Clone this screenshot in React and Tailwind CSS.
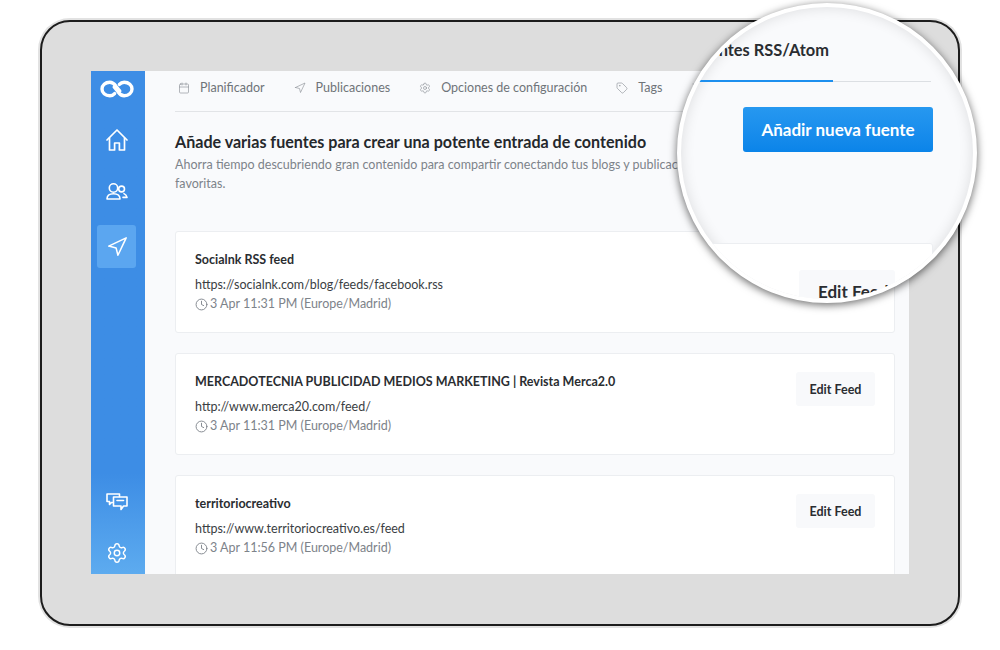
import React from "react";
import { Navigation, Settings, Calendar, Tag, Clock, Rss } from "lucide-react";

const LATO = "font-['Lato','Liberation_Sans',sans-serif]";

function Logo() {
  const link = "M20.8 12 L16.8 7 C15.2 4.6 13.5 3.2 10.8 3.2 C6.2 3.2 3 6.2 3 10 C3 13.8 6.2 16.8 10.8 16.8 C12.8 16.8 14.4 16 15.6 14.6";
  return (
    <svg width="36" height="20" viewBox="0 0 36 20" fill="none" stroke="#fff" strokeWidth="3.4" strokeLinecap="round" strokeLinejoin="round">
      <path d={link} />
      <path d={link} transform="rotate(180 18 10)" />
    </svg>
  );
}

function HomeIcon() {
  return (
    <svg width="22" height="22" viewBox="0 0 22 22" fill="none" stroke="#fff" strokeWidth="1.7" strokeLinecap="round" strokeLinejoin="round">
      <path d="M1 11 L11 1 L21 11" />
      <path d="M3.5 9 V21 H8.6 V14 H13.4 V21 H18.5 V9" />
    </svg>
  );
}

function UsersIcon() {
  return (
    <svg width="22" height="17" viewBox="0 0 22 17" fill="none" stroke="#fff" strokeWidth="1.6" strokeLinecap="round" strokeLinejoin="round">
      <circle cx="7.5" cy="5" r="4.2" />
      <path d="M1 16 C1 12.6 3.6 10.8 7.5 10.8 C11.4 10.8 14 12.6 14 16 Z" />
      <circle cx="15.6" cy="6" r="2.9" />
      <path d="M18 10.6 C19.6 11.4 20.6 12.6 21 14.4 L17 14.4" />
    </svg>
  );
}

function ChatIcon() {
  return (
    <svg width="22" height="18" viewBox="0 0 22 18" fill="none" stroke="#fff" strokeWidth="1.6" strokeLinejoin="round" strokeLinecap="round">
      <path d="M6.5 9.5 H5.5 L3.5 11.5 V8.5 H1 V1 H13.5 V3.5" />
      <path d="M7.5 4 H21 V13 H17.5 L15 16.5 V13 H7.5 Z" />
      <path d="M11 7.5 H17.5" />
    </svg>
  );
}

function NavTab({ icon, label }) {
  return (
    <div className="flex items-center gap-[10px]">
      <span className="text-[#8c9197]">{icon}</span>
      {label ? <span className="text-[12.5px] text-[#6f7479]">{label}</span> : null}
    </div>
  );
}

function FeedCard({ title, url, time }) {
  return (
    <div className="flex h-[102px] shrink-0 items-start justify-between rounded-[3px] border border-[#eceef1] bg-white px-[19px] pt-[18px]">
      <div>
        <div className="text-[12.5px] font-bold leading-[20px] text-[#2a2d31]">{title}</div>
        <div className="mt-[5px] text-[12.5px] leading-[20px] text-[#3a3e43]">{url}</div>
        <div className="mt-[1px] flex items-center gap-[2px] text-[12.5px] leading-[16px] text-[#7d838a]">
          <Clock size={13} strokeWidth={1.7} />
          <span>{time}</span>
        </div>
      </div>
      <div className="flex h-[34px] w-[79px] items-center justify-center rounded-[3px] bg-[#f8f9fb] pt-[2px] text-[12.5px] font-bold text-[#2a2d31]">Edit Feed</div>
    </div>
  );
}

function Magnifier() {
  return (
    <div className="absolute left-[677px] top-[3px] h-[300px] w-[300px] rounded-full border-[4px] border-white bg-[#f9fafc] shadow-[0_2px_9px_rgba(0,0,0,0.6)]">
      <div className="flex h-full w-full flex-col overflow-hidden rounded-full pl-[1px] pr-[40px] shadow-[inset_0_0_14px_rgba(0,0,0,0.12)]">
        <div className="mr-[2px] flex h-[75px] shrink-0 justify-end border-b border-[#dcdfe3]">
          <div className="relative flex w-[250px] justify-end pr-[102px] pt-[31px]">
            <span className="whitespace-nowrap text-[16.4px] font-bold leading-[24px] text-[#2a2d31]">Fuentes RSS/Atom</span>
            <div className="absolute bottom-[-1px] right-[98px] h-[2px] w-[150px] bg-[#1d8fee]" />
          </div>
        </div>
        <div className="mt-[25px] flex shrink-0 justify-end">
          <div className="flex h-[45px] w-[190px] items-center justify-center rounded-[3px] bg-gradient-to-b from-[#2698f0] to-[#0a84e9] text-[17px] font-bold text-white">Añadir nueva fuente</div>
        </div>
        <div className="mt-[91px] flex h-[200px] w-[300px] shrink-0 self-end rounded-[3px] border border-[#eceef1] bg-white pt-[26px]">
          <div className="ml-[165px] h-[60px] w-[96px] rounded-[3px] bg-[#f8f9fb] pl-[19px] pt-[10px] text-[17px] font-bold leading-[24px] text-[#2a2d31]">Edit Feed</div>
        </div>
      </div>
    </div>
  );
}

export default function App() {
  return (
    <div className={`relative h-[650px] w-[1000px] overflow-hidden bg-white pl-[40px] pt-[20px] ${LATO}`}>
      <div className="h-[606px] w-[920px] rounded-[30px] border-2 border-[#1c1c1c] bg-[#dddddd] pl-[49px] pt-[49px] shadow-[0_0_0_2px_#e2e2e2]">
        <div className="flex h-[503px] w-[818px] overflow-hidden bg-[#f9fafc]">
          <aside className="flex w-[54px] shrink-0 flex-col items-center bg-gradient-to-b from-[#3d8de5] from-80% to-[#5dabef] pr-[3px] text-white">
            <div className="mt-[8px]"><Logo /></div>
            <div className="mt-[30px]"><HomeIcon /></div>
            <div className="mt-[32px]"><UsersIcon /></div>
            <div className="mt-[25px] flex h-[43px] w-[39px] items-center justify-center rounded-[3px] bg-[#5ba6f0]">
              <Navigation size={22} strokeWidth={1.7} />
            </div>
            <div className="mt-auto"><ChatIcon /></div>
            <div className="mb-[10px] mt-[31px]"><Settings size={22} strokeWidth={1.6} /></div>
          </aside>
          <main className="flex min-w-0 flex-1 flex-col pl-[30px] pr-[14px]">
            <div className="flex h-[41px] shrink-0 items-center gap-[29px] border-b border-[#e2e4e7] pb-[6px] pl-[3px]">
              <NavTab label="Planificador" icon={<Calendar size={12} strokeWidth={1.3} />} />
              <NavTab label="Publicaciones" icon={<Navigation size={12} strokeWidth={1.3} />} />
              <NavTab label="Opciones de configuración" icon={<Settings size={12} strokeWidth={1.3} />} />
              <NavTab label="Tags" icon={<Tag size={12} strokeWidth={1.3} />} />
              <NavTab label="" icon={<Rss size={12} strokeWidth={1.3} />} />
            </div>
            <h1 className="mt-[19px] text-[16.1px] font-bold leading-[22px] text-[#25282c]">Añade varias fuentes para crear una potente entrada de contenido</h1>
            <p className="mt-[2px] w-[560px] text-[12.5px] leading-[19px] text-[#7d838a]">Ahorra tiempo descubriendo gran contenido para compartir conectando tus blogs y publicaciones favoritas.</p>
            <div className="mt-[38px] flex flex-col gap-[20px]">
              <FeedCard title="Socialnk RSS feed" url="https://socialnk.com/blog/feeds/facebook.rss" time="3 Apr 11:31 PM (Europe/Madrid)" />
              <FeedCard title="MERCADOTECNIA PUBLICIDAD MEDIOS MARKETING | Revista Merca2.0" url="http://www.merca20.com/feed/" time="3 Apr 11:31 PM (Europe/Madrid)" />
              <FeedCard title="territoriocreativo" url="https://www.territoriocreativo.es/feed" time="3 Apr 11:56 PM (Europe/Madrid)" />
            </div>
          </main>
        </div>
      </div>
      <Magnifier />
    </div>
  );
}
